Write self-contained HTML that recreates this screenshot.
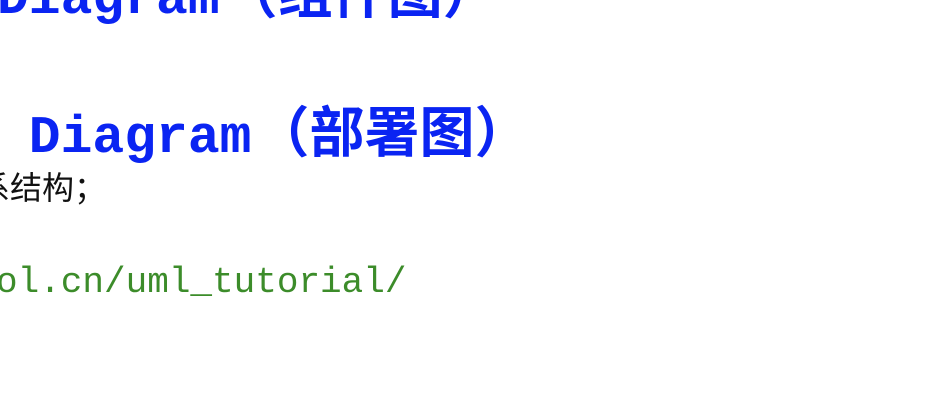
<!DOCTYPE html>
<html><head><meta charset="utf-8"><style>
html,body{margin:0;padding:0;background:#fff;width:934px;height:410px;overflow:hidden;position:relative}
.t{position:absolute;white-space:pre;line-height:1}
.b{font-family:"Liberation Mono","Noto Sans CJK SC",monospace;font-weight:bold;font-size:53px;color:#0a24f2}
.b span{font-size:55px;margin-left:3px}
.k{font-family:"Liberation Sans","Noto Sans CJK SC",sans-serif;font-size:32px;color:#111}
.g{font-family:"Liberation Mono",monospace;font-size:36px;color:#3c8c2a}
</style></head><body>
<div class="t b" style="left:-3px;top:-29px">Diagram<span>（组件图）</span></div>
<div class="t b" style="left:-3px;top:110px"> Diagram<span>（部署图）</span></div>
<div class="t k" style="left:-22px;top:172px">系结构；</div>
<div class="t g" style="left:-4px;top:265px">ol.cn/uml_tutorial/</div>
</body></html>
